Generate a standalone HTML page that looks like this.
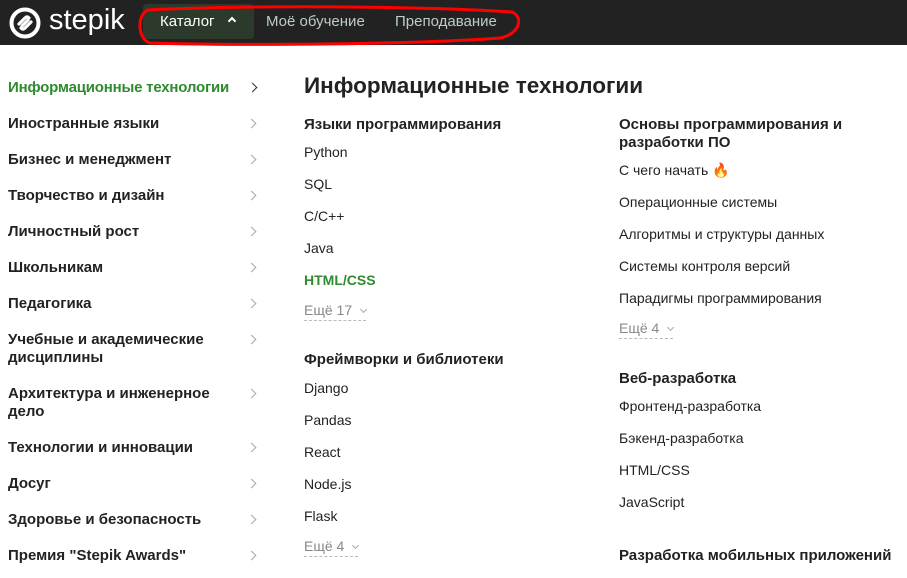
<!DOCTYPE html>
<html><head><meta charset="utf-8"><style>
*{margin:0;padding:0;box-sizing:border-box}
body{width:907px;height:578px;overflow:hidden;background:#fff;font-family:"Liberation Sans","Noto Sans CJK SC",sans-serif;position:relative;color:#222}
.hdr{position:absolute;left:0;top:0;width:907px;height:45px;background:#222}
.a{position:absolute;white-space:nowrap}
.l{font-size:15px;font-weight:bold;color:#222;left:8px;line-height:18px;width:225px;white-space:normal}
.ch{position:absolute;left:248px;width:7px;height:7px;border-right:1.5px solid #aaa;border-top:1.5px solid #aaa;transform:rotate(45deg)}
.h{font-size:15px;font-weight:bold;line-height:18px}
.k{font-size:14px;color:#222}
.m{font-size:14px;color:#888;border-bottom:1px dashed #bbb;padding-bottom:2px}
.m span{display:inline-block;width:5px;height:5px;border-right:1px solid #aaa;border-bottom:1px solid #aaa;transform:rotate(45deg);margin-left:9px;position:relative;top:-3px}
</style></head><body>
<div class="hdr"></div>
<svg class="a" style="left:9px;top:7px" width="32" height="32" viewBox="0 0 32 32"><circle cx="16" cy="16" r="13.5" fill="none" stroke="#fff" stroke-width="4"/><path d="M10 17 L16 11 Q18 9 20 11 M22 15 L16 21 Q14 23 12 21 M13 19 L19 13" stroke="#fff" stroke-width="3.2" stroke-linecap="round" fill="none"/></svg>
<div class="a" style="left:49px;top:4px;font-size:29px;color:#fff">stepik</div>
<div class="a" style="left:143px;top:4px;width:111px;height:35px;background:#2c3a2c;border-radius:4px"></div>
<div class="a" style="left:160px;top:13px;font-size:15px;color:#fff">Каталог</div>
<div class="a" style="left:229px;top:18px;width:6px;height:6px;border-left:2px solid #fff;border-top:2px solid #fff;transform:rotate(45deg)"></div>
<div class="a" style="left:266px;top:13px;font-size:15px;color:#bcc">Моё обучение</div>
<div class="a" style="left:395px;top:13px;font-size:15px;color:#bcc">Преподавание</div>
<svg class="a" style="left:0;top:0" width="530" height="50"><path d="M148 10 C250 5 420 6 512 12 C525 18 518 35 500 38 C420 44 250 46 150 43 C138 40 136 15 148 10 Z" fill="none" stroke="#f00" stroke-width="3"/></svg>

<div class="a l" style="top:79px;color:#2e8b2e;white-space:nowrap;letter-spacing:-0.2px">Информационные технологии</div><div class="ch" style="top:84px;border-color:#333;left:249px"></div>
<div class="a l" style="top:115px">Иностранные языки</div><div class="ch" style="top:120px"></div>
<div class="a l" style="top:151px">Бизнес и менеджмент</div><div class="ch" style="top:156px"></div>
<div class="a l" style="top:187px">Творчество и дизайн</div><div class="ch" style="top:192px"></div>
<div class="a l" style="top:223px">Личностный рост</div><div class="ch" style="top:228px"></div>
<div class="a l" style="top:259px">Школьникам</div><div class="ch" style="top:264px"></div>
<div class="a l" style="top:295px">Педагогика</div><div class="ch" style="top:300px"></div>
<div class="a l" style="top:331px">Учебные и академические дисциплины</div><div class="ch" style="top:336px"></div>
<div class="a l" style="top:385px">Архитектура и инженерное дело</div><div class="ch" style="top:390px"></div>
<div class="a l" style="top:439px">Технологии и инновации</div><div class="ch" style="top:444px"></div>
<div class="a l" style="top:475px">Досуг</div><div class="ch" style="top:480px"></div>
<div class="a l" style="top:511px">Здоровье и безопасность</div><div class="ch" style="top:516px"></div>
<div class="a l" style="top:547px">Премия "Stepik Awards"</div><div class="ch" style="top:552px"></div>

<div class="a" style="left:304px;top:73px;font-size:22.5px;font-weight:bold">Информационные технологии</div>
<div class="a h" style="left:304px;top:116px">Языки программирования</div>
<div class="a k" style="left:304px;top:144px">Python</div>
<div class="a k" style="left:304px;top:176px">SQL</div>
<div class="a k" style="left:304px;top:208px">C/C++</div>
<div class="a k" style="left:304px;top:240px">Java</div>
<div class="a k" style="left:304px;top:272px;color:#2e8b2e;font-weight:bold">HTML/CSS</div>
<div class="a m" style="left:304px;top:302px">Ещё 17<span></span></div>
<div class="a h" style="left:304px;top:351px">Фреймворки и библиотеки</div>
<div class="a k" style="left:304px;top:380px">Django</div>
<div class="a k" style="left:304px;top:412px">Pandas</div>
<div class="a k" style="left:304px;top:444px">React</div>
<div class="a k" style="left:304px;top:476px">Node.js</div>
<div class="a k" style="left:304px;top:508px">Flask</div>
<div class="a m" style="left:304px;top:538px">Ещё 4<span></span></div>

<div class="a h" style="left:619px;top:116px;white-space:normal;width:260px">Основы программирования и разработки ПО</div>
<div class="a k" style="left:619px;top:162px">С чего начать 🔥</div>
<div class="a k" style="left:619px;top:194px">Операционные системы</div>
<div class="a k" style="left:619px;top:226px">Алгоритмы и структуры данных</div>
<div class="a k" style="left:619px;top:258px">Системы контроля версий</div>
<div class="a k" style="left:619px;top:290px">Парадигмы программирования</div>
<div class="a m" style="left:619px;top:320px">Ещё 4<span></span></div>
<div class="a h" style="left:619px;top:370px">Веб-разработка</div>
<div class="a k" style="left:619px;top:398px">Фронтенд-разработка</div>
<div class="a k" style="left:619px;top:430px">Бэкенд-разработка</div>
<div class="a k" style="left:619px;top:462px">HTML/CSS</div>
<div class="a k" style="left:619px;top:494px">JavaScript</div>
<div class="a h" style="left:619px;top:547px">Разработка мобильных приложений</div>
</body></html>
